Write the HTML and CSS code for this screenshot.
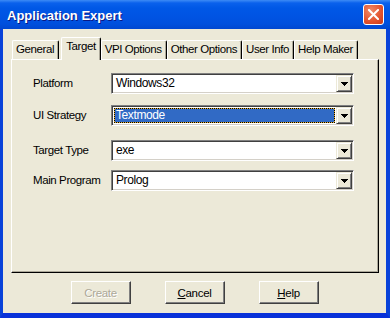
FILE: index.html
```html
<!DOCTYPE html>
<html lang="en">
<head>
    <meta charset="UTF-8">
    <meta name="viewport" content="width=device-width, initial-scale=1.0">
    <title>Application Expert</title>
    <link rel="stylesheet" href="styles.css">
</head>
<body>

    <div class="window">
        <div class="titlebar">
            <span class="title">Application Expert</span>
            <button class="close-btn" aria-label="Close">
                <svg width="11" height="11" viewBox="0 0 11 11">
                    <path d="M1 1L10 10M10 1L1 10" stroke="#fff" stroke-width="2" stroke-linecap="square"/>
                </svg>
            </button>
        </div>

        <div class="content">
            <div class="tabs">
                <div class="tab">General</div>
                <div class="tab active">Target</div>
                <div class="tab">VPI Options</div>
                <div class="tab">Other Options</div>
                <div class="tab">User Info</div>
                <div class="tab">Help Maker</div>
            </div>

            <div class="panel">
                <div class="field gap-1">
                    <label class="label">Platform</label>
                    <div class="combo">
                        <span class="combo-text">Windows32</span>
                        <span class="combo-btn"><svg width="7" height="4" viewBox="0 0 7 4"><path d="M0 0h7v1H0zM1 1h5v1H1zM2 2h3v1H2zM3 3h1v1H3z" fill="#000"/></svg></span>
                    </div>
                </div>
                <div class="field gap-2">
                    <label class="label">UI Strategy</label>
                    <div class="combo">
                        <span class="combo-text selected">Textmode</span>
                        <span class="combo-btn"><svg width="7" height="4" viewBox="0 0 7 4"><path d="M0 0h7v1H0zM1 1h5v1H1zM2 2h3v1H2zM3 3h1v1H3z" fill="#000"/></svg></span>
                    </div>
                </div>
                <div class="field gap-3">
                    <label class="label">Target Type</label>
                    <div class="combo">
                        <span class="combo-text">exe</span>
                        <span class="combo-btn"><svg width="7" height="4" viewBox="0 0 7 4"><path d="M0 0h7v1H0zM1 1h5v1H1zM2 2h3v1H2zM3 3h1v1H3z" fill="#000"/></svg></span>
                    </div>
                </div>
                <div class="field">
                    <label class="label">Main Program</label>
                    <div class="combo">
                        <span class="combo-text">Prolog</span>
                        <span class="combo-btn"><svg width="7" height="4" viewBox="0 0 7 4"><path d="M0 0h7v1H0zM1 1h5v1H1zM2 2h3v1H2zM3 3h1v1H3z" fill="#000"/></svg></span>
                    </div>
                </div>
            </div>

            <div class="buttons">
                <button class="button" disabled>Create</button>
                <button class="button"><u>C</u>ancel</button>
                <button class="button"><u>H</u>elp</button>
            </div>
        </div>
    </div>

</body>
</html>
```

FILE: styles.css
```css
* {
    margin: 0;
    padding: 0;
    box-sizing: border-box;
}

body {
    font-family: "Liberation Sans", Arial, sans-serif;
    font-size: 11.5px;
    letter-spacing: -0.4px;
    color: #000;
    background-color: #0831D9;
}

.window {
    width: 390px;
    height: 318px;
    display: flex;
    flex-direction: column;
    background-color: #0842D9;
    border-left: 3px solid #0842D9;
    border-right: 4px solid #0842D9;
    border-bottom: 5px solid #0831D9;
    box-shadow: inset 0 -1px #001EA0;
}

.titlebar {
    height: 29px;
    margin: 0 -4px 0 -3px;
    padding: 0 6px 0 7px;
    display: flex;
    align-items: center;
    justify-content: space-between;
    background: linear-gradient(#3D8BF5 0, #0A61EC 3px, #0058E6 8px, #0054E3 16px, #0050DD 24px, #0047D0 29px);
}

.title {
    color: white;
    font-weight: bold;
    font-size: 13px;
    letter-spacing: 0;
    text-shadow: 1px 1px #0A1883;
    padding-top: 1px;
}

.close-btn {
    width: 21px;
    height: 21px;
    border: 1px solid white;
    border-radius: 3px;
    background: radial-gradient(circle at 35% 30%, #F08A68, #E2512C 60%, #C8391A);
    display: flex;
    align-items: center;
    justify-content: center;
}

.content {
    flex: 1;
    background-color: #ECE9D8;
    padding: 8px 0 0 8px;
}

.tabs {
    display: flex;
    align-items: flex-end;
    padding-left: 1px;
}

.tab {
    position: relative;
    height: 19px;
    padding: 0 4px 0 3px;
    line-height: 17px;
    white-space: nowrap;
    border-top: 1px solid #fff;
    border-left: 1px solid #fff;
    border-right: 1px solid #000;
    border-top-left-radius: 2px;
    border-top-right-radius: 2px;
    box-shadow: inset -1px 0 #ACA899;
    background-color: #ECE9D8;
}

.tab.active {
    height: 23px;
    margin: 0 0 -1px 2px;
    padding: 0 4px;
    line-height: 17px;
    z-index: 1;
}

.panel {
    width: 368px;
    height: 214px;
    padding: 13px 0 0 21px;
    border-top: 1px solid #fff;
    border-left: 1px solid #fff;
    border-right: 1px solid #000;
    border-bottom: 1px solid #000;
    box-shadow: inset -1px -1px #ACA899;
}

.field {
    display: flex;
    align-items: center;
}

.gap-1 {
    margin-bottom: 11px;
}

.gap-2 {
    margin-bottom: 14px;
}

.gap-3 {
    margin-bottom: 9px;
}

.label {
    width: 78px;
    margin-top: -2px;
    white-space: nowrap;
}

.combo {
    width: 243px;
    height: 21px;
    display: flex;
    padding: 1px;
    background-color: white;
    border: 1px solid;
    border-color: #808080 #fff #fff #808080;
    box-shadow: inset 1px 1px #404040, inset -1px -1px #D4D0C8;
}

.combo-text {
    flex: 1;
    margin: 1px;
    padding-left: 2px;
    line-height: 15px;
    font-size: 12px;
}

.combo-text.selected {
    color: white;
    background: linear-gradient(#316AC5, #316AC5) padding-box, #E8B030;
    border: 1px dotted #000;
    padding-left: 1px;
    line-height: 13px;
}

.combo-btn {
    width: 16px;
    display: flex;
    align-items: center;
    justify-content: center;
    padding-top: 1px;
    background-color: #ECE9D8;
    border: 1px solid;
    border-color: #ECE9D8 #404040 #404040 #ECE9D8;
    box-shadow: inset 1px 1px #fff, inset -1px -1px #808080;
}

.buttons {
    display: flex;
    justify-content: center;
    gap: 34px;
    margin: 8px 0 0 -8px;
}

.button {
    width: 60px;
    height: 23px;
    font-family: "Liberation Sans", Arial, sans-serif;
    font-size: 11.5px;
    letter-spacing: -0.3px;
    color: #000;
    background-color: #ECE9D8;
    border: 1px solid;
    border-color: #fff #404040 #404040 #fff;
    box-shadow: inset -1px -1px #808080;
}

.button:disabled {
    color: #ACA899;
    text-shadow: 1px 1px #fff;
}
```
